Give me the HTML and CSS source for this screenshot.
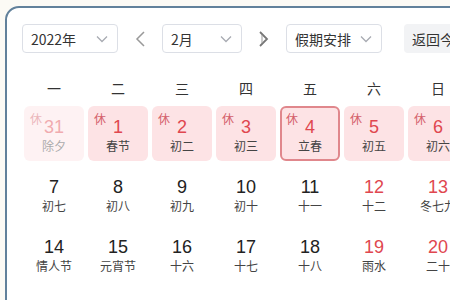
FILE: index.html
```html
<!DOCTYPE html>
<html lang="zh-CN">
<head>
    <meta charset="UTF-8">
    <title>万年历</title>
    <link rel="stylesheet" href="styles.css">
</head>
<body>
    <div class="calendar">
        <!-- 顶部选择栏 -->
        <div class="toolbar">
            <div class="select year">
                <span>2022年</span>
                <svg class="caret" width="12" height="8" viewBox="0 0 12 8"><path d="M1 1.5 L6 6.5 L11 1.5" fill="none" stroke="#a8abb2" stroke-width="1.3"/></svg>
            </div>
            <div class="arrow">
                <svg width="12" height="16" viewBox="0 0 12 16"><path d="M10 1 L3 8 L10 15" fill="none" stroke="#999" stroke-width="1.5"/></svg>
            </div>
            <div class="select month">
                <span>2月</span>
                <svg class="caret" width="12" height="8" viewBox="0 0 12 8"><path d="M1 1.5 L6 6.5 L11 1.5" fill="none" stroke="#a8abb2" stroke-width="1.3"/></svg>
            </div>
            <div class="arrow">
                <svg width="12" height="16" viewBox="0 0 12 16"><path d="M2 1 L9 8 L2 15" fill="none" stroke="#777" stroke-width="1.8"/><path d="M4 4 V12" stroke="#999" stroke-width="1"/></svg>
            </div>
            <div class="select holiday">
                <span>假期安排</span>
                <svg class="caret" width="12" height="8" viewBox="0 0 12 8"><path d="M1 1.5 L6 6.5 L11 1.5" fill="none" stroke="#a8abb2" stroke-width="1.3"/></svg>
            </div>
            <button class="today">返回今天</button>
        </div>

        <!-- 星期 -->
        <div class="grid week">
            <div>一</div><div>二</div><div>三</div><div>四</div><div>五</div><div>六</div><div>日</div>
        </div>

        <!-- 日期 -->
        <div class="grid days">
            <div class="day rest other"><i>休</i><b>31</b><small>除夕</small></div>
            <div class="day rest"><i>休</i><b>1</b><small>春节</small></div>
            <div class="day rest"><i>休</i><b>2</b><small>初二</small></div>
            <div class="day rest"><i>休</i><b>3</b><small>初三</small></div>
            <div class="day rest active"><i>休</i><b>4</b><small>立春</small></div>
            <div class="day rest"><i>休</i><b>5</b><small>初五</small></div>
            <div class="day rest"><i>休</i><b>6</b><small>初六</small></div>

            <div class="day"><b>7</b><small>初七</small></div>
            <div class="day"><b>8</b><small>初八</small></div>
            <div class="day"><b>9</b><small>初九</small></div>
            <div class="day"><b>10</b><small>初十</small></div>
            <div class="day"><b>11</b><small>十一</small></div>
            <div class="day weekend"><b>12</b><small>十二</small></div>
            <div class="day weekend"><b>13</b><small>冬七九</small></div>

            <div class="day"><b>14</b><small>情人节</small></div>
            <div class="day"><b>15</b><small>元宵节</small></div>
            <div class="day"><b>16</b><small>十六</small></div>
            <div class="day"><b>17</b><small>十七</small></div>
            <div class="day"><b>18</b><small>十八</small></div>
            <div class="day weekend"><b>19</b><small>雨水</small></div>
            <div class="day weekend"><b>20</b><small>二十</small></div>

            <div class="day"><b>21</b><small>廿一</small></div>
            <div class="day"><b>22</b><small>廿二</small></div>
            <div class="day"><b>23</b><small>廿三</small></div>
            <div class="day"><b>24</b><small>廿四</small></div>
            <div class="day"><b>25</b><small>廿五</small></div>
            <div class="day weekend"><b>26</b><small>廿六</small></div>
            <div class="day weekend"><b>27</b><small>廿七</small></div>
        </div>
    </div>
</body>
</html>
```

FILE: styles.css
```css
/* 页面基础 */
body {
    margin: 0;
    background: #fcfaf5;
    font-family: "Liberation Sans", "Noto Sans CJK SC", sans-serif;
    color: #333;
    overflow: hidden;
}
.calendar {
    margin: 6px 0 0 5px;
    width: 520px;
    height: 400px;
    background: #fff;
    border: 2px solid #62819b;
    border-radius: 14px;
    padding: 16px 0 0 15px;
}

/* 顶部选择栏 */
.toolbar {
    display: flex;
    align-items: center;
    height: 29px;
    margin-bottom: 23px;
}
.select {
    box-sizing: border-box;
    height: 29px;
    border: 1px solid #dcdfe6;
    border-radius: 4px;
    display: flex;
    align-items: center;
    justify-content: space-between;
    padding: 0 9px 0 8px;
    font-size: 14px;
    font-family: "Noto Sans CJK SC", sans-serif;
    color: #333;
}
.year { width: 96px; }
.month { width: 80px; }
.holiday { width: 96px; }
.caret { display: block; }
.arrow {
    width: 44px;
    display: flex;
    justify-content: center;
}
.arrow svg { display: block; }
.today {
    margin-left: 22px;
    height: 29px;
    border: none;
    border-radius: 4px;
    background: #f2f3f5;
    padding: 0 8px;
    font-size: 14px;
    font-family: "Noto Sans CJK SC", sans-serif;
    color: #333;
    white-space: nowrap;
}

/* 日历格子 */
.grid {
    display: grid;
    grid-template-columns: repeat(7, 60px);
    column-gap: 4px;
    margin-left: 2px;
}
.week {
    height: 24px;
    line-height: 24px;
    text-align: center;
    font-size: 14px;
    font-family: "Noto Sans CJK SC", sans-serif;
    margin-bottom: 6px;
}
.days { row-gap: 5px; }
.day {
    position: relative;
    box-sizing: border-box;
    height: 55px;
    border-radius: 6px;
    padding-top: 10px;
    text-align: center;
}
.day b {
    display: block;
    font-weight: normal;
    font-size: 18px;
    line-height: 22px;
    color: #222;
}
.day small {
    display: block;
    font-size: 12px;
    line-height: 16px;
    color: #444;
    font-family: "Noto Sans CJK SC", sans-serif;
}
.day i {
    position: absolute;
    left: 6px;
    top: 4px;
    font-style: normal;
    font-size: 12px;
    color: #d4606a;
    font-family: "Noto Sans CJK SC", sans-serif;
}
.rest { background: #fde3e5; }
.rest b, .weekend b { color: #e0474f; }
.other { opacity: 0.45; }
.active {
    border: 2px solid #e0878c;
    padding-top: 8px;
}
.active i { left: 4px; top: 2px; }
```
